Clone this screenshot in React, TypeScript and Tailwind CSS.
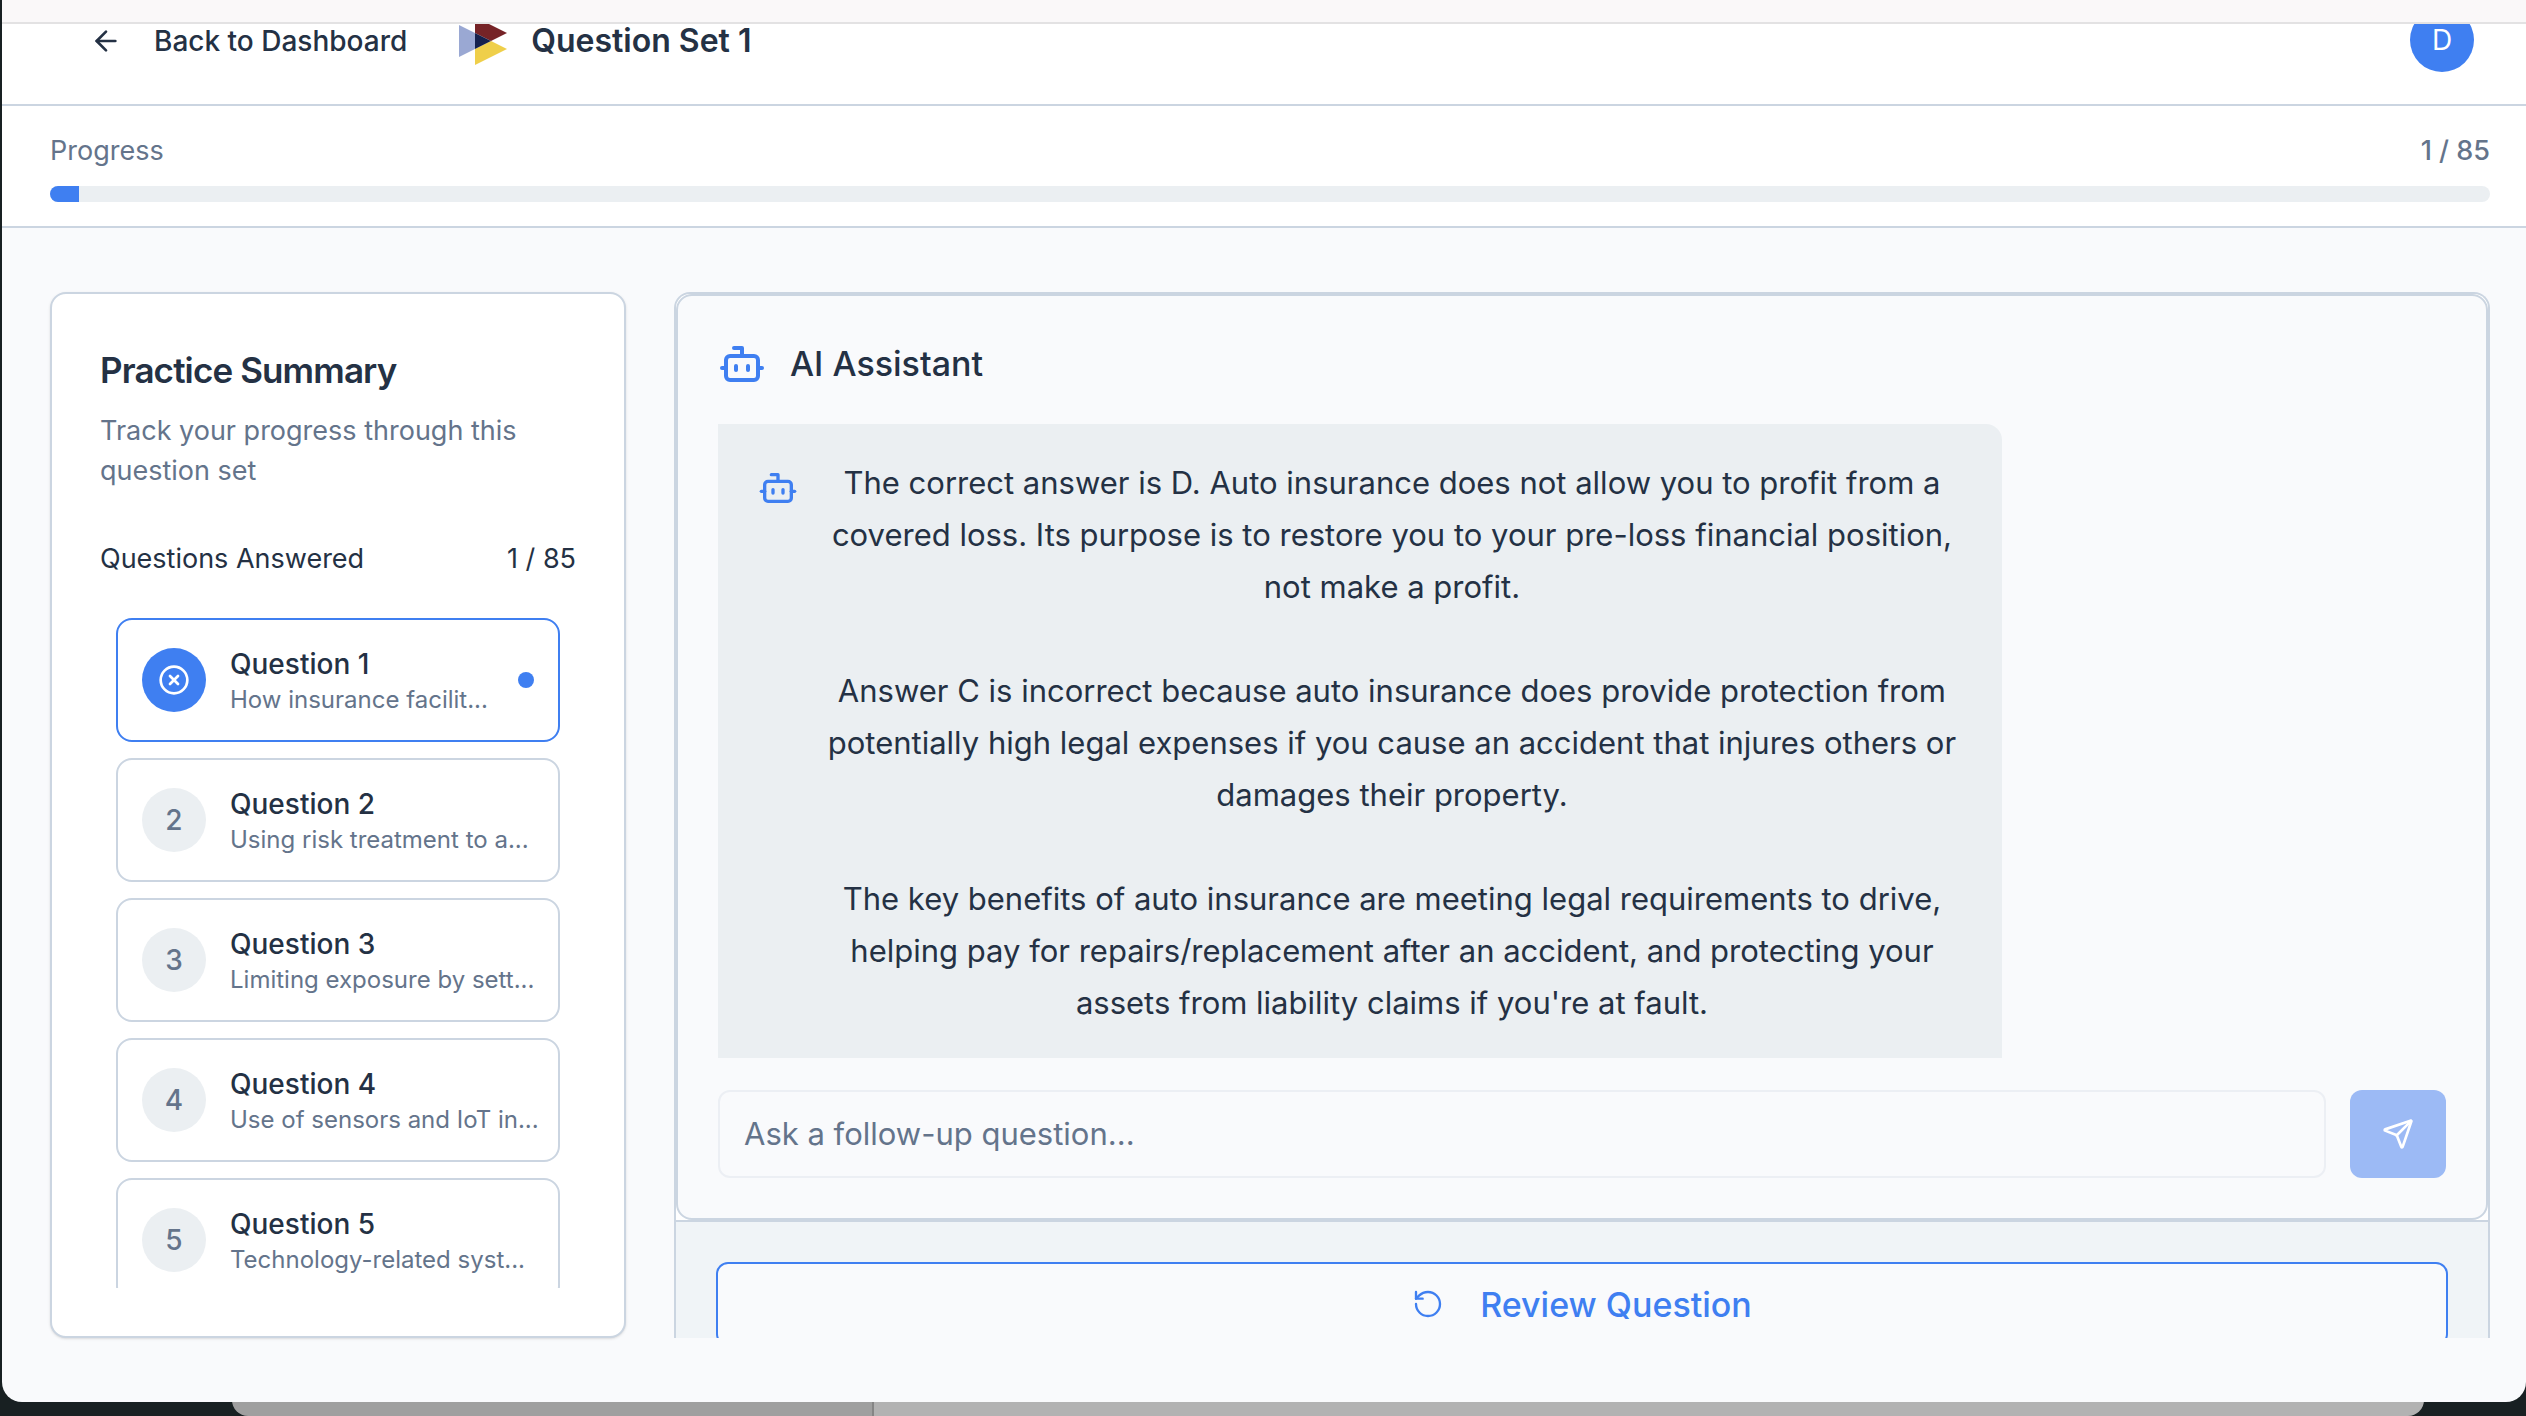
import { ArrowLeft, Bot, CircleX, RotateCcw, Send } from "lucide-react";

const TOTAL = 85;
const ANSWERED = 1;

const questions = [
  { id: 1, topic: "How insurance facilit...", active: true },
  { id: 2, topic: "Using risk treatment to a...", active: false },
  { id: 3, topic: "Limiting exposure by sett...", active: false },
  { id: 4, topic: "Use of sensors and IoT in...", active: false },
  { id: 5, topic: "Technology-related syst...", active: false },
];

const answer = [
  "The correct answer is D. Auto insurance does not allow you to profit from a covered loss. Its purpose is to restore you to your pre-loss financial position, not make a profit.",
  "Answer C is incorrect because auto insurance does provide protection from potentially high legal expenses if you cause an accident that injures others or damages their property.",
  "The key benefits of auto insurance are meeting legal requirements to drive, helping pay for repairs/replacement after an accident, and protecting your assets from liability claims if you're at fault.",
];

function Logo() {
  return (
    <svg viewBox="0 0 48 48" className="size-12 shrink-0" aria-hidden="true">
      <path d="M0 8 16 16V32L0 40Z" fill="#9aa8d3" />
      <path d="M16 0 48 16 32 24 16 16Z" fill="#762327" />
      <path d="M16 48 48 32 32 24 16 32Z" fill="#efcf4a" />
      <path d="M16 16 32 24 16 32Z" fill="#15214d" />
    </svg>
  );
}

function Header() {
  return (
    <header className="flex h-[82px] items-start justify-between overflow-hidden border-b-2 border-[#cbd5e1] bg-white pr-[52px] pl-22">
      <div className="flex h-[34px] items-center">
        <button className="flex items-center gap-8 text-[28px] leading-8 font-medium">
          <ArrowLeft className="size-8" />
          Back to Dashboard
        </button>
        <span className="ml-13 flex">
          <Logo />
        </span>
        <h1 className="ml-6 text-[32px] leading-8 font-semibold">Question Set 1</h1>
      </div>
      <button className="-mt-4 flex size-16 items-center justify-center rounded-full bg-[#3f7ff1] text-[28px] text-white">
        D
      </button>
    </header>
  );
}

function Progress() {
  return (
    <section className="border-b-2 border-[#cbd5e1] bg-white pt-[25px] pr-9 pb-6 pl-12">
      <div className="flex justify-between text-[27px] leading-10 text-[#64748b]">
        <span>Progress</span>
        <span className="font-medium">
          {ANSWERED} / {TOTAL}
        </span>
      </div>
      <div className="mt-[15px] h-4 overflow-hidden rounded-full bg-[#ebeff2]">
        <div className="h-full bg-[#3f7ff1]" style={{ width: `${(ANSWERED / TOTAL) * 100}%` }} />
      </div>
    </section>
  );
}

function QuestionItem({ id, topic, active }: { id: number; topic: string; active: boolean }) {
  return (
    <li>
      <button
        className={`flex h-31 w-full items-center gap-6 rounded-2xl border-2 bg-white px-6 text-left ${
          active ? "border-[#3f7ff1]" : "border-[#cbd5e1]"
        }`}
      >
        <span
          className={`flex size-16 shrink-0 items-center justify-center rounded-full text-[28px] font-medium ${
            active ? "bg-[#3f7ff1] text-white" : "bg-[#ebeff2] text-[#64748b]"
          }`}
        >
          {active ? <CircleX className="size-8" /> : id}
        </span>
        <span className="min-w-0 flex-1 pt-1">
          <span className="block text-[28px] leading-9 font-medium">Question {id}</span>
          <span className="block text-2xl leading-9 whitespace-nowrap text-[#64748b]">{topic}</span>
        </span>
        {active && <span className="size-4 shrink-0 rounded-full bg-[#3f7ff1]" />}
      </button>
    </li>
  );
}

function Summary() {
  return (
    <aside className="flex w-144 shrink-0 flex-col rounded-2xl border-2 border-[#cbd5e1] bg-white p-12 shadow-sm">
      <h2 className="pt-1 text-[35px] leading-12 font-semibold tracking-tight">Practice Summary</h2>
      <p className="mt-[17px] text-[27px] leading-10 text-[#64748b]">Track your progress through this question set</p>
      <div className="mt-12 flex justify-between text-[27px] leading-10">
        <span>Questions Answered</span>
        <span>
          {ANSWERED} / {TOTAL}
        </span>
      </div>
      <ul className="mt-[23px] flex min-h-0 flex-1 flex-col gap-4 overflow-hidden px-4 pt-4">
        {questions.map((q) => (
          <QuestionItem key={q.id} {...q} />
        ))}
      </ul>
    </aside>
  );
}

function Assistant() {
  return (
    <section className="flex h-[926px] shrink-0 flex-col rounded-2xl border-2 border-[#cbd5e1] bg-[#f9fafc] p-10">
      <h2 className="flex items-center gap-6 text-[34px] leading-14 font-medium">
        <Bot className="size-12 text-[#3f7ff1]" />
        AI Assistant
      </h2>
      <div className="mt-8 min-h-0 flex-1 overflow-hidden">
        <div className="flex w-[74.3%] items-start gap-6 rounded-tr-2xl bg-[#ebeff2] px-10 py-[33px]">
          <Bot className="mt-[11px] size-10 shrink-0 text-[#3f7ff1]" />
          <div className="flex flex-1 flex-col gap-13 text-center text-[31px] leading-[52px]">
            {answer.map((text) => (
              <p key={text}>{text}</p>
            ))}
          </div>
        </div>
      </div>
      <form className="mt-8 flex h-22 shrink-0 gap-6">
        <input
          aria-label="Follow-up question"
          placeholder="Ask a follow-up question..."
          className="min-w-0 flex-1 rounded-xl border-2 border-[#eceff4] bg-[#f9fafc] px-6 text-[31px] placeholder:text-[#64748b]"
        />
        <button
          type="button"
          aria-label="Send"
          className="flex w-24 items-center justify-center rounded-xl bg-[#9cbaf5] text-white"
        >
          <Send className="size-8" />
        </button>
      </form>
    </section>
  );
}

export default function App() {
  return (
    <div className="h-screen overflow-hidden bg-[#182022] font-[Inter,sans-serif] text-[#243144]">
      <div className="relative flex h-full flex-col pb-[14px] pl-[2px]">
        <div className="absolute inset-x-0 bottom-0 flex h-8 pr-[102px] pl-58">
          <div className="w-[642px] rounded-bl-2xl border-r-2 border-[#858585] bg-[#9f9f9f]" />
          <div className="flex-1 rounded-br-2xl bg-[#b2b2b2]" />
        </div>
        <div className="relative flex min-h-0 flex-1 flex-col overflow-hidden rounded-b-[20px] bg-[#f9fafc]">
          <div className="h-6 shrink-0 border-b-2 border-[#e3e2e3] bg-[#faf8f9]" />
          <Header />
          <Progress />
          <main className="flex min-h-0 flex-1 gap-12 pt-16 pr-9 pb-16 pl-12">
            <Summary />
            <div className="flex min-w-0 flex-1 flex-col overflow-hidden rounded-t-2xl border-2 border-b-0 border-[#cbd5e1] bg-white">
              <Assistant />
              <div className="border-t-2 border-[#cbd5e1] bg-[#f0f4f7] p-10">
                <button className="flex h-21 w-full items-center justify-center gap-9 rounded-xl border-2 border-[#3f7ff1] bg-[#f9fafc] text-[34px] font-medium text-[#3f7ff1]">
                  <RotateCcw className="size-8" strokeWidth={1.75} />
                  Review Question
                </button>
              </div>
            </div>
          </main>
        </div>
      </div>
    </div>
  );
}
